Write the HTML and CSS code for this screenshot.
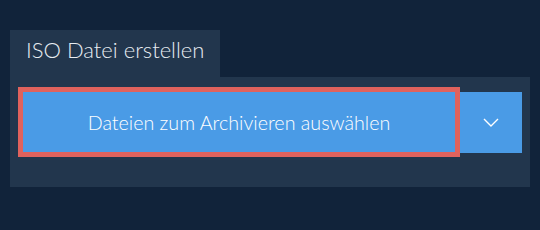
FILE: index.html
```html
<!DOCTYPE html>
<html>

<head>
    <meta charset="utf-8">
    <title>ISO Datei erstellen</title>
    <link rel="stylesheet" href="styles.css">
</head>

<body>

    <div class="box">

        <div class="tab">ISO Datei erstellen</div>

        <div class="panel">
            <button class="pick">Dateien zum Archivieren auswählen</button>
            <button class="more">
                <svg width="16" height="9" viewBox="0 0 16 9">
                    <path d="M1 1 L8 8 L15 1" fill="none" stroke="#fff" stroke-width="1.4"/>
                </svg>
            </button>
        </div>

    </div>

</body>

</html>
```

FILE: styles.css
```css
body {
    margin: 0;
    background-color: #11233a;
    font-family: Lato, "Open Sans", sans-serif;
}

.box {
    padding: 30px 10px;
}

.tab {
    display: inline-block;
    width: 194px;
    height: 47px;
    padding-left: 16px;
    line-height: 40px;
    font-size: 22px;
    font-weight: 300;
    color: #e8edf2;
    background-color: #22364d;
    box-sizing: content-box;
}

.panel {
    display: flex;
    align-items: flex-start;
    height: 110px;
    padding: 10px 8px 0 8px;
    box-sizing: border-box;
    background-color: #22364d;
}

.pick {
    width: 442px;
    height: 70px;
    border: 5px solid #e0625d;
    background-color: #4a9be6;
    color: #fff;
    font-family: Lato, "Open Sans", sans-serif;
    font-size: 19.7px;
    font-weight: 300;
    padding: 0;
}

.more {
    width: 62px;
    height: 61px;
    margin-top: 5px;
    border: none;
    padding: 0;
    background-color: #4a9be6;
    display: flex;
    align-items: center;
    justify-content: center;
}
```
